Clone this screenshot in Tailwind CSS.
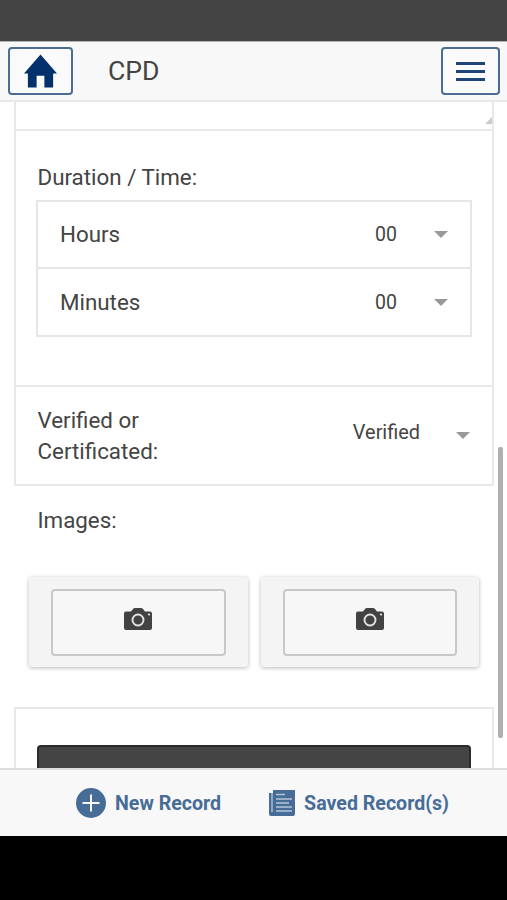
<!DOCTYPE html>
<html lang="en">
<head>
  <meta charset="UTF-8" />
  <meta name="viewport" content="width=device-width, initial-scale=1.0" />
  <title>CPD</title>
  <script src="https://cdn.jsdelivr.net/npm/@tailwindcss/browser@4"></script>
</head>
<body class="bg-black font-['Roboto',sans-serif] text-[#444] overflow-hidden">
  <div class="h-[900px] w-[507px] flex flex-col">
    <!-- Status bar -->
    <div class="h-[41px] shrink-0 bg-[#444]"></div>

    <!-- Header -->
    <header class="h-[61px] shrink-0 flex items-center bg-[#f8f8f8] border-t border-t-[#b5b5b5] border-b-2 border-b-[#e8e8e8] pl-2 pr-[7px]">
      <button class="w-[65px] h-[48px] flex items-center justify-center bg-[#fafafa] border-2 border-[#4c6c95] rounded-[4px]">
        <svg class="w-[33px] h-[34px]" viewBox="0 0 34 34" fill="#03316c"><path d="M17 0 34 19.500H30V34H21V22H13V34H4V19.500H0Z" /></svg>
      </button>
      <h1 class="ml-[35px] flex-1 text-[26.600px] leading-8">CPD</h1>
      <button class="w-[59px] h-[48px] flex flex-col items-center justify-center gap-[5px] bg-[#fafafa] border-2 border-[#4c6c95] rounded-[4px]">
        <span class="w-[29px] h-[3px] bg-[#1f4477]"></span>
        <span class="w-[29px] h-[3px] bg-[#1f4477]"></span>
        <span class="w-[29px] h-[3px] bg-[#1f4477]"></span>
      </button>
    </header>

    <!-- Form -->
    <main class="relative flex-1 min-h-0 overflow-hidden bg-white pl-[14px] pr-[13px]">
      <div class="h-[29px] flex items-end justify-end border-x-2 border-b-2 border-[#e8e8e8] pb-[5px]">
        <svg class="w-[7px] h-[7px]" viewBox="0 0 7 7"><path d="M0 7 7 0V7Z" fill="#ccc" /></svg>
      </div>

      <section class="h-[256px] border-x-2 border-b-2 border-[#e8e8e8] pt-[30px] px-5">
        <h2 class="pl-[1.500px] text-[22.350px] leading-8">Duration / Time:</h2>
        <div class="mt-[7px] border-2 border-[#e6e6e6] text-[22.350px]">
          <div class="h-[67px] flex items-center border-b-2 border-[#e6e6e6] pl-[22px] pr-[22px]">
            <span class="flex-1">Hours</span>
            <span class="text-[19.500px] mr-[37px] pt-px">00</span>
            <svg class="w-[14px] h-[7px]" viewBox="0 0 14 7"><path d="M0 0H14L7 7Z" fill="#999" /></svg>
          </div>
          <div class="h-[66px] flex items-center pl-[22px] pr-[22px]">
            <span class="flex-1 pt-px">Minutes</span>
            <span class="text-[19.500px] mr-[37px] pt-px">00</span>
            <svg class="w-[14px] h-[7px]" viewBox="0 0 14 7"><path d="M0 0H14L7 7Z" fill="#999" /></svg>
          </div>
        </div>
      </section>

      <section class="h-[99px] flex items-center border-x-2 border-b-2 border-[#e8e8e8] pl-[21.500px] pr-[22px]">
        <span class="flex-1 text-[22.350px] leading-[31px]">Verified or<br />Certificated:</span>
        <span class="text-[19.900px] mr-9 -mt-1.5">Verified</span>
        <svg class="w-[14px] h-[7px]" viewBox="0 0 14 7"><path d="M0 0H14L7 7Z" fill="#999" /></svg>
      </section>

      <h2 class="mt-[18px] ml-[23.500px] text-[22.350px] leading-8">Images:</h2>
      <div class="mt-[41px] ml-[15px] mr-[15px] flex gap-[13px]">
        <div class="flex-1 h-[90px] bg-[#f4f4f4] rounded-[3px] shadow-[0_1px_4px_rgba(0,0,0,0.28)] px-[22px] pt-3">
          <button class="w-full h-[67px] flex items-center justify-center bg-[#f7f7f7] border-2 border-[#c8c8c8] rounded-[4px] pb-2">
            <svg class="w-7 h-[22px]" viewBox="0 0 28 22"><path d="M2 3.500H7L9 1Q9.800 0 11 0H17Q18.200 0 19 1L21 3.500H26Q28 3.500 28 5.500V20Q28 22 26 22H2Q0 22 0 20V5.500Q0 3.500 2 3.500Z" fill="#424242" /><circle cx="14" cy="12" r="5.500" fill="none" stroke="#e4e4e4" stroke-width="1.900" /><circle cx="25" cy="6.500" r="1.100" fill="#ececec" /></svg>
          </button>
        </div>
        <div class="flex-1 h-[90px] bg-[#f4f4f4] rounded-[3px] shadow-[0_1px_4px_rgba(0,0,0,0.28)] px-[22px] pt-3">
          <button class="w-full h-[67px] flex items-center justify-center bg-[#f7f7f7] border-2 border-[#c8c8c8] rounded-[4px] pb-2">
            <svg class="w-7 h-[22px]" viewBox="0 0 28 22"><path d="M2 3.500H7L9 1Q9.800 0 11 0H17Q18.200 0 19 1L21 3.500H26Q28 3.500 28 5.500V20Q28 22 26 22H2Q0 22 0 20V5.500Q0 3.500 2 3.500Z" fill="#424242" /><circle cx="14" cy="12" r="5.500" fill="none" stroke="#e4e4e4" stroke-width="1.900" /><circle cx="25" cy="6.500" r="1.100" fill="#ececec" /></svg>
          </button>
        </div>
      </div>

      <section class="mt-[40px] h-[120px] border-2 border-[#e8e8e8] px-[21px] pt-9">
        <button class="block w-full h-[60px] bg-[#444] border-2 border-[#2b2b2b] rounded-[4px]"></button>
      </section>

      <!-- Scrollbar -->
      <div class="absolute top-[345px] right-1 w-[5px] h-[291px] bg-[#b0b0b0] rounded-[2px]"></div>
    </main>

    <!-- Footer -->
    <footer class="h-[68px] shrink-0 flex items-center bg-[#f8f8f8] border-t-2 border-[#dedede] pl-[76px] text-[19.600px] font-bold text-[#466c97]">
      <a class="flex items-center gap-[9px]">
        <svg class="w-[30px] h-[30px]" viewBox="0 0 30 30"><circle cx="15" cy="15" r="15" fill="#466c97" /><path d="M15 6.500V23.500M6.500 15H23.500" stroke="#f8f8f8" stroke-width="2" /></svg>
        <span class="pt-0.5">New Record</span>
      </a>
      <a class="ml-[48px] flex items-center gap-[9px]">
        <svg class="w-[26px] h-[26px]" viewBox="0 0 26 26"><path d="M4 0H26V24Q26 26 24 26H2Q0 26 0 24V3H4Z" fill="#466c97" /><path d="M3 3V22" stroke="#c3d0de" stroke-width="1.200" /><path d="M7 4.500H16M7 9H23M7 13H20M7 17H23M7 21H23" stroke="#b4c5d6" stroke-width="1.500" /></svg>
        <span class="pt-0.5">Saved Record(s)</span>
      </a>
    </footer>
    <!-- Navigation bar -->
    <div class="h-[64px] shrink-0 bg-black"></div>
  </div>
</body>
</html>
